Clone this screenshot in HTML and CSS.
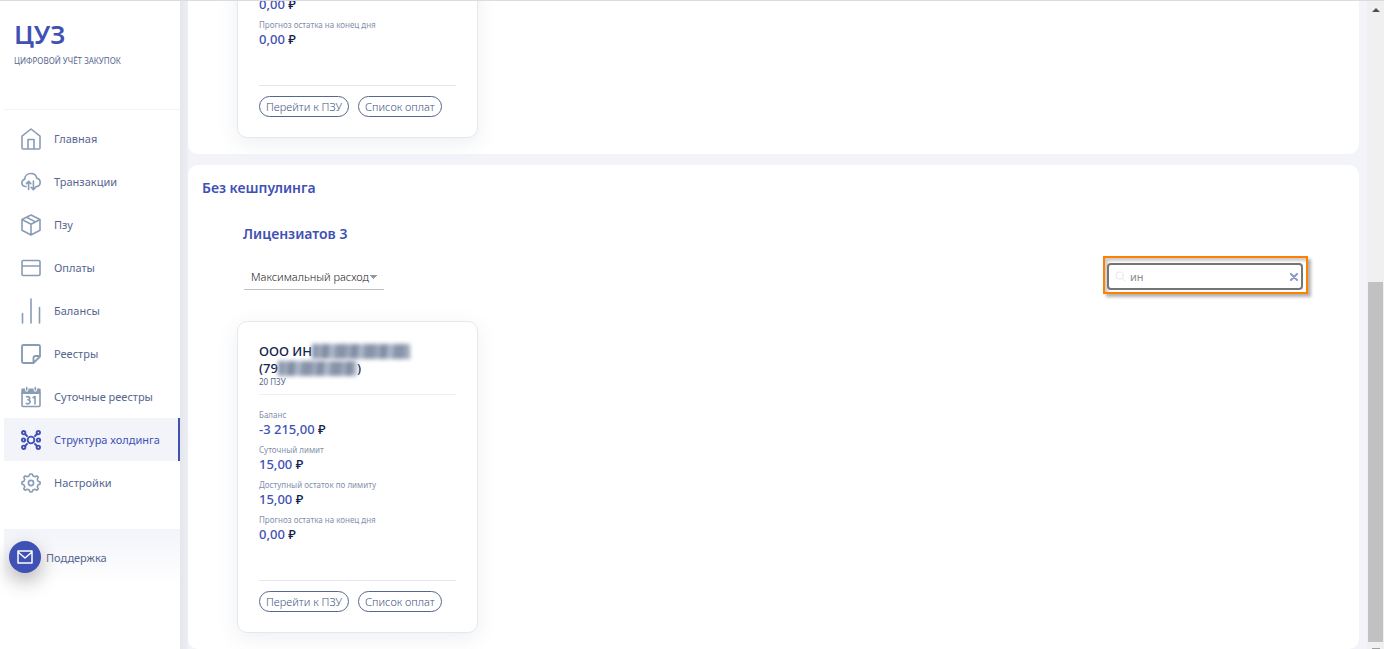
FILE: index.html
```html
<!DOCTYPE html>
<html lang="ru">
  <head>
    <meta charset="UTF-8" />
    <meta name="viewport" content="width=device-width, initial-scale=1.0" />
    <title>ЦУЗ - Структура холдинга</title>
    <link rel="stylesheet" href="styles.css">
  </head>
  <body>
    <aside class="sidebar">
      <div class="brand">
        <div class="logo">ЦУЗ</div>
        <div class="slogan">ЦИФРОВОЙ УЧЁТ ЗАКУПОК</div>
      </div>

      <nav class="menu">
        <a href="#" class="menu-item">
          <svg class="icon" viewBox="0 0 20 22"><path d="M1 8.200 10 1l9 7.200V20a1 1 0 0 1-1 1H2a1 1 0 0 1-1-1zM7 21v-9.500h6V21"/></svg>
          Главная
        </a>
        <a href="#" class="menu-item">
          <svg class="icon" viewBox="0 0 20 22"><path d="M5 15.500H4.200a3.700 3.700 0 0 1-.4-7.300C3.800 4.800 6.500 2.500 9.800 2.500c3 0 5.500 2 6 4.800a4.200 4.200 0 0 1 .2 8.200h-1M7.600 18.500v-8M5.400 12.600l2.200-2.200 2.200 2.200M12.400 10v8.500M10.200 16.400l2.200 2.200 2.200-2.200"/></svg>
          Транзакции
        </a>
        <a href="#" class="menu-item">
          <svg class="icon" viewBox="0 0 20 22"><path d="M10 1 19 5.500v10.800L10 21l-9-4.700V5.500zM1 5.500l9 4.700 9-4.700M10 10.200V21M5.500 3.300l9 4.600"/></svg>
          Пзу
        </a>
        <a href="#" class="menu-item">
          <svg class="icon" viewBox="0 0 20 22"><path d="M2.200 3.500h15.600a1.200 1.200 0 0 1 1.200 1.200v12.600a1.200 1.200 0 0 1-1.200 1.200H2.200A1.200 1.200 0 0 1 1 17.300V4.700a1.200 1.200 0 0 1 1.200-1.200zM1 9h18"/></svg>
          Оплаты
        </a>
        <a href="#" class="menu-item">
          <svg class="icon icon-tall" viewBox="0 0 20 26"><path d="M1.500 15.500V25M10 1v24M18.500 9.500V25"/></svg>
          Балансы
        </a>
        <a href="#" class="menu-item">
          <svg class="icon icon-bold" viewBox="0 0 20 22"><path d="M2.500 2h15A1.500 1.500 0 0 1 19 3.500v10L12.500 20h-10A1.500 1.500 0 0 1 1 18.500v-15A1.500 1.500 0 0 1 2.500 2zM12.500 19.500V15a2 2 0 0 1 2-2H19"/></svg>
          Реестры
        </a>
        <a href="#" class="menu-item">
          <svg class="icon" viewBox="0 0 20 22"><path d="M1 7h18v12.500a1 1 0 0 1-1 1H2a1 1 0 0 1-1-1z"/><path class="fill" d="M.3 3.500a1 1 0 0 1 1-1H4V4a1.700 1.700 0 0 0 3.400 0V2.500h5.200V4A1.700 1.700 0 0 0 16 4V2.500h2.700a1 1 0 0 1 1 1V8H.3z"/><path d="M5.700 1.500V4M14.300 1.500V4"/><path class="digits" d="M5.500 10.800c3.500-1 4.500 2.500 1.500 3 3.500.5 2.500 5-1.700 3.800M12 11.700l2-1.200V18"/></svg>
          Суточные реестры
        </a>
        <a href="#" class="menu-item active">
          <svg class="icon icon-bold" viewBox="0 0 20 22"><circle cx="10" cy="11" r="3.400"/><circle cx="2.700" cy="3.700" r="1.700"/><circle cx="17.300" cy="3.700" r="1.700"/><circle cx="2.500" cy="11" r="1.600"/><circle cx="17.500" cy="11" r="1.600"/><circle cx="2.700" cy="18.300" r="1.700"/><circle cx="17.300" cy="18.300" r="1.700"/><path d="M4 5l2 2M16 5l-2 2M4 17l2-2M16 17l-2-2"/></svg>
          Структура холдинга
        </a>
        <a href="#" class="menu-item">
          <svg class="icon" viewBox="0 0 20 22"><circle cx="10" cy="11" r="2.600"/><path d="M8.200 3.800 8.800 2h2.400l.6 1.800 2 .9 2.200-.8 1.200 1.300-.9 2.100.8 2 2 .8v1.900l-2 .8-.8 2 .9 2.100-1.300 1.300-2.100-.9-2 .8-.8 1.900H9l-.8-1.900-2-.8-2.100.9-1.300-1.300.9-2.100-.8-2-2-.8v-1.900l2-.8.8-2-.9-2.100 1.300-1.300 2.200.8z"/></svg>
          Настройки
        </a>
      </nav>

      <a href="#" class="support">
        <span class="support-icon">
          <svg viewBox="0 0 16 14"><path d="M1 1h14v12H1zM1 2l7 6 7-6"/></svg>
        </span>
        Поддержка
      </a>
    </aside>

    <main class="content">
      <section class="panel">
        <article class="card">
          <dl class="values">
            <dd>0,00 <span>₽</span></dd>
            <dt>Прогноз остатка на конец дня</dt>
            <dd>0,00 <span>₽</span></dd>
          </dl>
          <div class="card-footer">
            <button type="button">Перейти к ПЗУ</button>
            <button type="button">Список оплат</button>
          </div>
        </article>
      </section>

      <section class="panel">
        <h2>Без кешпулинга</h2>
        <h3>Лицензиатов 3</h3>

        <div class="toolbar">
          <select class="sort" aria-label="Сортировка">
            <option>Максимальный расход</option>
          </select>
          <div class="highlight">
            <div class="search">
              <svg class="search-icon" viewBox="0 0 12 12"><circle cx="5" cy="5" r="4"/><path d="M8 8l3 3"/></svg>
              <input type="text" value="ин" aria-label="Поиск">
              <button type="button" class="clear" aria-label="Очистить">
                <svg viewBox="0 0 8 8"><path d="M1 1l6 6M7 1L1 7"/></svg>
              </button>
            </div>
          </div>
        </div>

        <article class="card">
          <header class="card-header">
            <h4>
              <span class="line">ООО ИН<i class="hidden-name"></i></span>
              <span class="line">(79<i class="hidden-inn"></i>)</span>
            </h4>
            <p>20 ПЗУ</p>
          </header>
          <dl class="values">
            <dt>Баланс</dt>
            <dd>-3 215,00 <span>₽</span></dd>
            <dt>Суточный лимит</dt>
            <dd>15,00 <span>₽</span></dd>
            <dt>Доступный остаток по лимиту</dt>
            <dd>15,00 <span>₽</span></dd>
            <dt>Прогноз остатка на конец дня</dt>
            <dd>0,00 <span>₽</span></dd>
          </dl>
          <div class="card-footer">
            <button type="button">Перейти к ПЗУ</button>
            <button type="button">Список оплат</button>
          </div>
        </article>
      </section>
    </main>

    <div class="scrollbar">
      <div class="arrow"></div>
      <div class="track-space"></div>
      <div class="thumb"></div>
      <div class="arrow-end"></div>
    </div>
  </body>
</html>
```

FILE: styles.css
```css
* {
  box-sizing: border-box;
}

body {
  margin: 0;
  height: 100vh;
  display: flex;
  overflow: hidden;
  border-top: 1px solid #dcdcdf;
  background-color: #ffffff;
  font-family: "Noto Sans", "Open Sans", sans-serif;
  font-size: 11px;
  color: #56668f;
}

h2,
h3,
h4,
p,
dl,
dd {
  margin: 0;
}

a {
  color: inherit;
  text-decoration: none;
}

svg {
  fill: none;
  stroke: currentColor;
  stroke-linejoin: round;
  stroke-linecap: round;
}

/* Sidebar */
.sidebar {
  flex: 0 0 180px;
  padding-left: 4px;
}

.brand {
  height: 109px;
  padding: 15px 10px 0;
  border-bottom: 1px solid #f3f4f8;
}

.logo {
  font-size: 26px;
  line-height: 36px;
  font-weight: 600;
  color: #3f51b5;
}

.slogan {
  font-size: 8px;
  line-height: 18px;
  white-space: nowrap;
}

.menu {
  padding-top: 7px;
}

.menu-item {
  display: flex;
  align-items: center;
  gap: 13px;
  height: 43px;
  padding-left: 17px;
  white-space: nowrap;
}

.menu-item.active {
  background-color: #f3f4f9;
  color: #3f51b5;
  border-right: 2px solid #3f51b5;
}

.icon {
  width: 20px;
  height: 22px;
  color: #8a9cb5;
  stroke-width: 1.6;
}

.icon-tall {
  height: 26px;
}

.icon-bold {
  stroke-width: 1.9;
}

.icon .fill {
  fill: currentColor;
  stroke: none;
}

.active .icon {
  color: #3f51b5;
}

.support {
  display: flex;
  align-items: center;
  gap: 5px;
  height: 56px;
  margin-top: 25px;
  padding-left: 5px;
  background: linear-gradient(#f3f4f9, #ffffff);
}

.support-icon {
  display: flex;
  align-items: center;
  justify-content: center;
  width: 32px;
  height: 32px;
  border-radius: 50%;
  background-color: #3f51b5;
  color: #ffffff;
  box-shadow: 0 8px 20px rgba(0, 0, 0, 0.3);
}

.support-icon svg {
  width: 16px;
  height: 14px;
  stroke-width: 1.5;
}

/* Content */
.content {
  flex: 1;
  min-width: 0;
  display: flex;
  flex-direction: column;
  justify-content: flex-end;
  gap: 11px;
  padding: 0 8px;
  overflow: hidden;
  background: linear-gradient(to right, #e4e6eb, #eceef3 8px, #f3f4f9 8px);
}

.panel {
  flex-shrink: 0;
  padding: 14px 14px 16px;
  border-radius: 10px;
  background-color: #ffffff;
}

h2,
h3 {
  font-size: 14px;
  line-height: 18px;
  font-weight: 600;
  color: #3f51b5;
}

h3 {
  margin: 28px 0 13px 41px;
}

.toolbar {
  display: flex;
  justify-content: space-between;
  margin: 0 37px 27px 42px;
}

.sort {
  width: 140px;
  height: 27px;
  margin-top: 7px;
  padding: 0 7px;
  border: none;
  border-bottom: 1px solid #c0c0c4;
  appearance: none;
  background: linear-gradient(to bottom right, #999999 50%, transparent 50%) no-repeat 130px 12px / 4px 4px,
    linear-gradient(to bottom left, #999999 50%, transparent 50%) no-repeat 126px 12px / 4px 4px;
  font: inherit;
  font-weight: 300;
  color: #222222;
}

.highlight {
  padding: 5px 3px 2px 2px;
  border: 2px solid #ff8000;
  box-shadow: 3px 3px 3px rgba(0, 0, 0, 0.3), inset 3px 3px 3px rgba(0, 0, 0, 0.2);
}

.search {
  display: flex;
  align-items: center;
  width: 196px;
  height: 27px;
  padding: 0 3px 0 6px;
  border: 2px solid #757575;
  border-radius: 4px;
  background-color: #ffffff;
}

.search-icon {
  width: 11px;
  height: 11px;
  color: #e4e4e8;
}

.search input {
  flex: 1;
  min-width: 0;
  padding: 0 4px;
  border: none;
  outline: none;
  font: inherit;
  color: #8b8b8b;
}

.clear {
  display: flex;
  padding: 0;
  border: none;
  background: none;
  color: #8799c6;
}

.clear svg {
  width: 8px;
  height: 8px;
  stroke-width: 2;
}

/* Card */
.card {
  width: 241px;
  margin-left: 35px;
  padding: 21px 21px 20px;
  border: 1px solid #e6e8f0;
  border-radius: 10px;
  background-color: #ffffff;
  box-shadow: 0 5px 20px rgba(80, 100, 130, 0.1);
}

.card-header {
  margin-bottom: 13px;
  padding-bottom: 7px;
  border-bottom: 1px solid #eeeff2;
}

.card h4 {
  font-size: 13px;
  line-height: 17px;
  font-weight: 500;
  color: #10234f;
}

.card p {
  font-size: 8px;
  line-height: 10px;
}

.line {
  display: flex;
  align-items: center;
}

.hidden-name,
.hidden-inn {
  height: 15px;
  background: repeating-linear-gradient(95deg, #8793a9 0 5px, #a3adbe 7px 9px, #7f8ba3 12px 16px, #b0bac8 19px 22px, #8793a9 25px 29px);
  filter: blur(2px);
}

.hidden-name {
  width: 98px;
}

.hidden-inn {
  width: 79px;
}

.values dt {
  font-size: 8px;
  line-height: 14px;
  color: #8490ad;
}

.values dd {
  margin-bottom: 6px;
  font-size: 13px;
  line-height: 15px;
  font-weight: 500;
  color: #3f51b5;
}

.values span {
  color: #10234f;
}

.card-footer {
  display: flex;
  gap: 9px;
  margin-top: 38px;
  padding-top: 10px;
  border-top: 1px solid #e4e6ea;
}

.card-footer button {
  height: 21px;
  padding: 0 6px;
  border: 1px solid #56668f;
  border-radius: 11px;
  background-color: #ffffff;
  font: inherit;
  font-weight: 300;
  line-height: 19px;
  color: #43547f;
  white-space: nowrap;
}

/* Scrollbar */
.scrollbar {
  flex: 0 0 17px;
  display: flex;
  flex-direction: column;
  padding: 0 1px;
  background-color: #f0f0f0;
}

.arrow,
.arrow-end {
  align-self: center;
  border: 4px solid transparent;
  border-top: none;
  border-bottom-color: #505050;
}

.arrow {
  margin-top: 7px;
}

.arrow-end {
  margin-top: 6px;
  width: 8px;
  height: 1px;
  border: none;
  background-color: #a0a0a0;
}

.track-space {
  flex: 27;
}

.thumb {
  flex: 36;
  background-color: #c1c1c1;
}
```
